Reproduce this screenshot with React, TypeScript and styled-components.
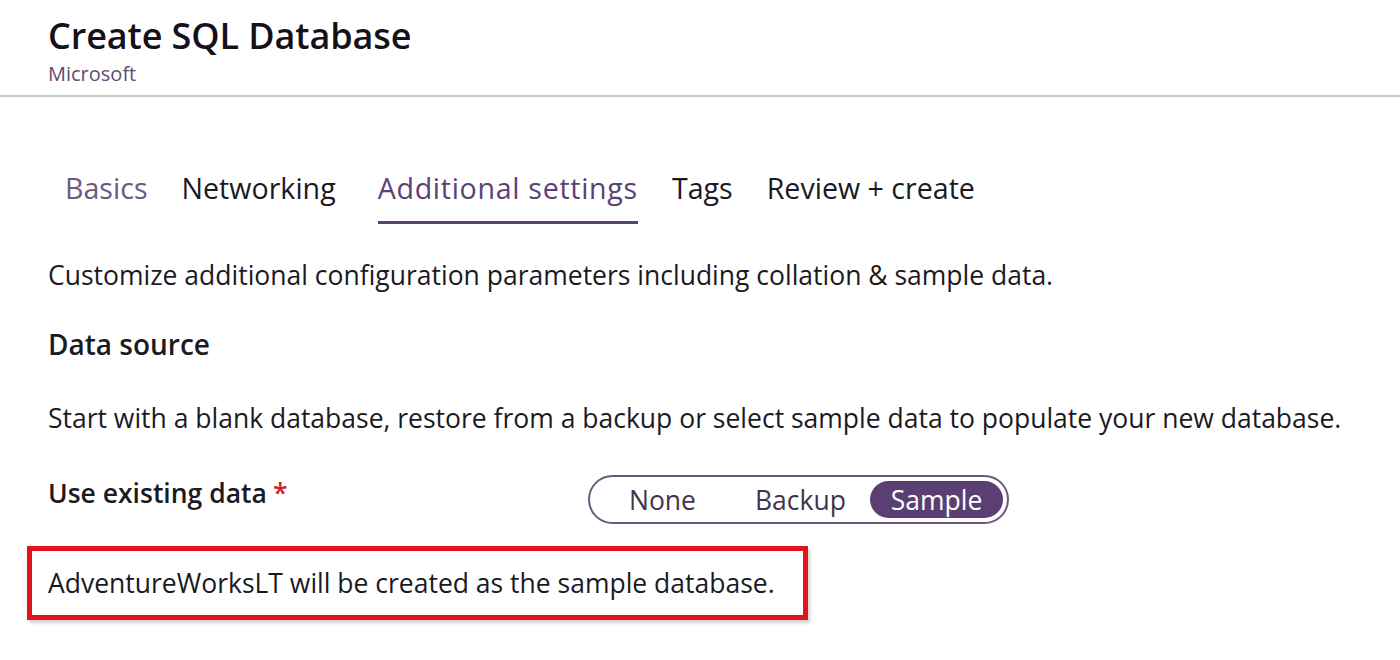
import React from "react";
import styled, { createGlobalStyle } from "styled-components";

const Global = createGlobalStyle`
  html, body { margin: 0; padding: 0; background: #ffffff; }
  body { font-family: "Open Sans", "Noto Sans", sans-serif; color: #1b1a1f; }
`;

const Page = styled.div`
  width: 1400px;
  height: 660px;
  overflow: hidden;
  background: #fff;
`;

const Header = styled.header`
  padding: 12px 48px 7px;
  border-bottom: 2px solid #c8c8c8;
`;

const Title = styled.h1`
  margin: 0;
  font-size: 36px;
  font-weight: 600;
  line-height: 48px;
  color: #141218;
  letter-spacing: -0.1px;
`;

const Subtitle = styled.div`
  font-size: 20px;
  line-height: 28px;
  color: #5e4d72;
`;

const Body = styled.main`
  padding: 0 48px;
`;

const Tabs = styled.nav`
  display: flex;
  margin-top: 72px;
`;

const Tab = styled.div<{ $active?: boolean; $muted?: boolean }>`
  padding: 0 17px 0 ${(p) => (p.$active ? "25px" : "17px")};
  span {
    display: inline-block;
    font-size: 28.6px;
    line-height: 38px;
    padding-bottom: 14px;
    letter-spacing: ${(p) => (p.$active ? "0.7px" : "0")};
    color: ${(p) => (p.$active ? "#5b4177" : p.$muted ? "#6b5a82" : "#1b1a1f")};
    font-weight: ${(p) => (p.$active ? 500 : 400)};
    border-bottom: 3px solid ${(p) => (p.$active ? "#5b4177" : "transparent")};
  }
`;

const Text = styled.p`
  margin: 0;
  font-size: 26.5px;
  line-height: 36px;
  color: #1b1a1f;
`;

const Description = styled(Text)`
  margin-top: 33px;
`;

const SectionTitle = styled.h2`
  margin: 33px 0 0;
  font-size: 28px;
  line-height: 36px;
  font-weight: 600;
  color: #1b1a1f;
`;

const SourceText = styled(Text)`
  margin-top: 38px;
`;

const FieldRow = styled.div`
  display: flex;
  align-items: flex-start;
  margin-top: 39px;
`;

const Label = styled.div`
  width: 540px;
  font-size: 26.5px;
  font-weight: 600;
  color: #1b1a1f;
  line-height: 36px;
`;

const Required = styled.span`
  color: #c4262e;
  margin-left: 6px;
`;

const Toggle = styled.div`
  display: flex;
  align-items: center;
  width: 421px;
  height: 49px;
  margin-top: 0;
  box-sizing: border-box;
  border: 2px solid #6b5a7e;
  border-radius: 25px;
  padding: 4px;
  justify-content: flex-end;
`;

const Option = styled.div<{ $selected?: boolean; $w: number }>`
  width: ${(p) => p.$w}px;
  height: 37px;
  border-radius: 19px;
  display: flex;
  align-items: center;
  justify-content: center;
  font-size: 26.5px;
  color: ${(p) => (p.$selected ? "#ffffff" : "#3f3550")};
  background: ${(p) => (p.$selected ? "#5b3f73" : "transparent")};
`;

const Callout = styled.div`
  margin: 22px 0 0 -21px;
  width: 781px;
  height: 74px;
  box-sizing: border-box;
  border: 5px solid #e3131e;
  box-shadow: 2px 3px 3px rgba(0, 0, 0, 0.18);
  padding: 0 0 0 16px;
  display: flex;
  align-items: center;
`;

export default function App() {
  return (
    <Page>
      <Global />
      <Header>
        <Title>Create SQL Database</Title>
        <Subtitle>Microsoft</Subtitle>
      </Header>
      <Body>
        <Tabs>
          <Tab $muted><span>Basics</span></Tab>
          <Tab><span>Networking</span></Tab>
          <Tab $active><span>Additional settings</span></Tab>
          <Tab><span>Tags</span></Tab>
          <Tab><span>Review + create</span></Tab>
        </Tabs>
        <Description>
          Customize additional configuration parameters including collation &amp; sample data.
        </Description>
        <SectionTitle>Data source</SectionTitle>
        <SourceText>
          Start with a blank database, restore from a backup or select sample data to populate your new database.
        </SourceText>
        <FieldRow>
          <Label>
            Use existing data<Required>*</Required>
          </Label>
          <Toggle>
            <Option $w={138}>None</Option>
            <Option $w={140}>Backup</Option>
            <Option $w={134} $selected>Sample</Option>
          </Toggle>
        </FieldRow>
        <Callout>
          <Text>AdventureWorksLT will be created as the sample database.</Text>
        </Callout>
      </Body>
    </Page>
  );
}
